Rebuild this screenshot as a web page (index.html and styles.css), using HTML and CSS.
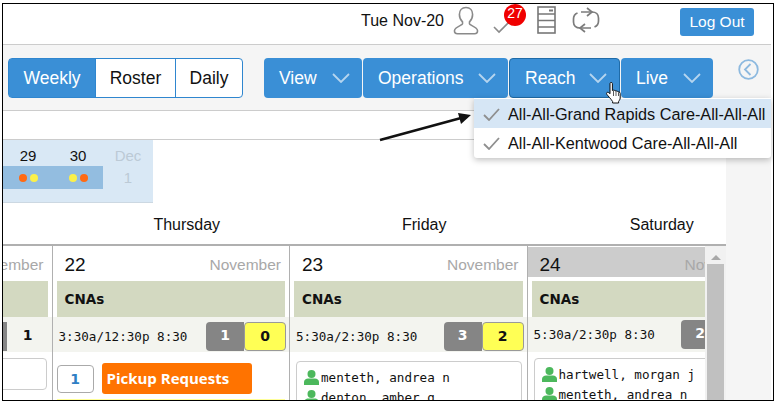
FILE: index.html
```html
<!DOCTYPE html>
<html lang="en">
<head>
    <meta charset="UTF-8">
    <title>Schedule</title>
    <link rel="stylesheet" href="styles.css">
</head>
<body>
    <div class="frame">
        <div class="topbar">
            <span class="today">Tue Nov-20</span>
            <svg class="icon-user" width="26" height="29" viewBox="0 0 26 29" fill="none" stroke="#8a8a8a" stroke-width="1.6">
                <path d="M13 1.5c-4.2 0-6.6 3-6.6 7 0 3 1.300 5.600 3.100 7.300v2.200c0 1.200-7.700 3-8 6.500-.2 2 .8 3.200 3 3.200h17c2.200 0 3.200-1.200 3-3.200-.3-3.500-8-5.300-8-6.500v-2.200c1.800-1.700 3.100-4.300 3.100-7.300 0-4-2.400-7-6.600-7z"/>
            </svg>
            <span class="tasks">
                <svg width="18" height="14" viewBox="0 0 18 14" fill="none" stroke="#8a8a8a" stroke-width="1.6">
                    <path d="M1 7l5 5L17 1"/>
                </svg>
                <span class="badge">27</span>
            </span>
            <svg class="icon-cabinet" width="19" height="28" viewBox="0 0 19 28" fill="none" stroke="#777" stroke-width="1.600">
                <rect x="1" y="1" width="17" height="26"/>
                <path d="M1 8h17M1 14.500h17M1 21h17"/>
                <path d="M12 4.500h4" stroke-width="2"/>
            </svg>
            <svg class="icon-sync" width="28" height="27" viewBox="0 0 28 27" fill="none" stroke="#7c7c7c" stroke-width="1.700">
                <path d="M9 5h11c4 0 6.500 2.500 6.500 6v3c0 3-1.500 5-4 6"/>
                <path d="M19 21H8c-4 0-6.500-2.500-6.500-6v-3c0-3 1.500-5 4-6"/>
                <path d="M15 1l5 4-5 4M13 17l-5 4 5 4"/>
            </svg>
            <button class="logout">Log Out</button>
        </div>

        <div class="toolbar">
            <div class="views">
                <span class="view active">Weekly</span>
                <span class="view">Roster</span>
                <span class="view">Daily</span>
            </div>
            <div class="menus">
                <span class="menu menu-view">View <svg class="chev" width="18" height="10" viewBox="0 0 18 10"><path d="M1 1l8 8 8-8"/></svg></span>
                <span class="menu menu-ops">Operations <svg class="chev" width="18" height="10" viewBox="0 0 18 10"><path d="M1 1l8 8 8-8"/></svg></span>
                <span class="menu menu-reach">Reach <svg class="chev" width="18" height="10" viewBox="0 0 18 10"><path d="M1 1l8 8 8-8"/></svg></span>
                <span class="menu menu-live">Live <svg class="chev" width="18" height="10" viewBox="0 0 18 10"><path d="M1 1l8 8 8-8"/></svg></span>
            </div>
            <svg class="back" width="21" height="21" viewBox="0 0 21 21" fill="none" stroke="#8db9df" stroke-width="1.800">
                <circle cx="10.500" cy="10.500" r="9.300"/>
                <path d="M12.500 5l-5.500 5.500 5.500 5.500"/>
            </svg>
        </div>

        <div class="body-row">
            <div class="main">
                <div class="strip"></div>
                <div class="mini">
                    <div class="mini-col">
                        <span class="mini-num">29</span>
                        <span class="mini-dots"><i class="dot orange"></i><i class="dot yellow"></i></span>
                    </div>
                    <div class="mini-col">
                        <span class="mini-num">30</span>
                        <span class="mini-dots"><i class="dot yellow"></i><i class="dot orange"></i></span>
                    </div>
                    <div class="mini-col off">
                        <span class="mini-num">Dec</span>
                        <span class="mini-next">1</span>
                    </div>
                </div>
                <div class="weekdays">
                    <span>Thursday</span>
                    <span>Friday</span>
                    <span>Saturday</span>
                </div>
                <div class="calendar">
                    <div class="days">
                        <div class="day">
                            <div class="day-head"><span class="day-num">21</span><span class="day-month">November</span></div>
                            <div class="role">CNAs</div>
                            <div class="shift">
                                <span class="shift-time"></span>
                                <span class="count grey">1</span>
                                <span class="count plain">1</span>
                            </div>
                            <div class="card card-empty"></div>
                        </div>
                        <div class="day">
                            <div class="day-head"><span class="day-num">22</span><span class="day-month">November</span></div>
                            <div class="role">CNAs</div>
                            <div class="shift">
                                <span class="shift-time">3:30a/12:30p 8:30</span>
                                <span class="count grey">1</span>
                                <span class="count yellow">0</span>
                            </div>
                            <div class="pickup">
                                <span class="pickup-count">1</span>
                                <span class="pickup-btn">Pickup Requests</span>
                            </div>
                            <div class="note"></div>
                        </div>
                        <div class="day">
                            <div class="day-head"><span class="day-num">23</span><span class="day-month">November</span></div>
                            <div class="role">CNAs</div>
                            <div class="shift">
                                <span class="shift-time">5:30a/2:30p 8:30</span>
                                <span class="count grey">3</span>
                                <span class="count yellow">2</span>
                            </div>
                            <div class="card card-low">
                                <div class="person"><svg width="15" height="15" viewBox="0 0 15 15"><circle cx="7.500" cy="4" r="4"/><path d="M0 15v-3c0-2 2-3.500 4-3.500h7c2 0 4 1.500 4 3.500v3z"/></svg>menteth, andrea n</div>
                                <div class="person"><svg width="15" height="15" viewBox="0 0 15 15"><circle cx="7.500" cy="4" r="4"/><path d="M0 15v-3c0-2 2-3.500 4-3.500h7c2 0 4 1.500 4 3.500v3z"/></svg>denton, amber g</div>
                            </div>
                        </div>
                        <div class="day today-col">
                            <div class="day-head"><span class="day-num">24</span><span class="day-month">November</span></div>
                            <div class="role">CNAs</div>
                            <div class="shift">
                                <span class="shift-time">5:30a/2:30p 8:30</span>
                                <span class="count grey">2</span>
                                <span class="count yellow">0</span>
                            </div>
                            <div class="card">
                                <div class="person"><svg width="15" height="15" viewBox="0 0 15 15"><circle cx="7.500" cy="4" r="4"/><path d="M0 15v-3c0-2 2-3.500 4-3.500h7c2 0 4 1.500 4 3.500v3z"/></svg>hartwell, morgan j</div>
                                <div class="person"><svg width="15" height="15" viewBox="0 0 15 15"><circle cx="7.500" cy="4" r="4"/><path d="M0 15v-3c0-2 2-3.500 4-3.500h7c2 0 4 1.500 4 3.500v3z"/></svg>menteth, andrea n</div>
                            </div>
                        </div>
                    </div>
                    <div class="scrollbar">
                        <span class="scroll-up"></span>
                        <span class="scroll-thumb"></span>
                    </div>
                </div>
            </div>
            <div class="side"></div>
        </div>

        <!-- open Reach menu, callout arrow and pointer sit over the page -->
        <div class="dropdown">
            <div class="drop-item current"><svg width="17" height="13" viewBox="0 0 17 13" fill="none" stroke="#8f8f8f" stroke-width="1.800"><path d="M1 7l5 5L16 1"/></svg>All-All-Grand Rapids Care-All-All-All</div>
            <div class="drop-item"><svg width="17" height="13" viewBox="0 0 17 13" fill="none" stroke="#8f8f8f" stroke-width="1.800"><path d="M1 7l5 5L16 1"/></svg>All-All-Kentwood Care-All-All-All</div>
        </div>
        <svg class="callout" width="94" height="32" viewBox="0 0 94 32">
            <path d="M1 28L82 6" stroke="#111" stroke-width="2.600"/>
            <path d="M92 3L79 1l3 11z" fill="#111"/>
        </svg>
        <svg class="pointer" width="17" height="23" viewBox="0 0 17 23">
            <path fill="#fff" stroke="#111" d="M4 1.500c0-1.400 2.400-1.400 2.400 0V8.500l1-.3c.6 0 1.400 0 1.600.6l1.400.2c.6 0 1.200.2 1.400.7l1.200.3c.8.1 1.200.6 1.200 1.400v4.600c0 1.500-1 2.500-1.600 3.500v1.500H6.600v-1.500C5 17 2 14 .8 12.300c-.6-1-.2-2 .8-2 .9 0 1.700.8 2.400 1.500z"/>
            <path fill="none" stroke="#111" stroke-width=".7" d="M7.500 9v5M10 9.500V14M12.500 10.500V14"/>
        </svg>
    </div>
</body>
</html>
```

FILE: styles.css
```css
* {
    box-sizing: border-box;
}
body {
    margin: 0;
    background: white;
    font-family: "Liberation Sans", Arial, sans-serif;
    color: #111;
}
.frame {
    position: relative;
    width: 772px;
    height: 398px;
    margin: 3px 0 0 2px;
    padding-right: 2px;
    border: 1px solid #000;
    overflow: hidden;
    display: flex;
    flex-direction: column;
    background: white;
}

/* top bar */
.topbar {
    height: 41px;
    flex: none;
    display: flex;
    align-items: flex-start;
    padding-right: 17px;
    border-bottom: 1px solid #ccc;
}
.today {
    margin-left: auto;
    margin-top: 8px;
    font-size: 16px;
}
.icon-user {
    margin: 2px 0 0 9px;
}
.tasks {
    position: relative;
    width: 18px;
    height: 14px;
    margin: 16px 0 0 14px;
}
.tasks svg {
    display: block;
}
.badge {
    position: absolute;
    left: 11px;
    top: -16px;
    width: 22px;
    height: 22px;
    border-radius: 50%;
    background: #f00000;
    color: white;
    font-size: 14px;
    line-height: 19px;
    text-align: center;
}
.icon-cabinet {
    margin: 2px 0 0 26px;
}
.icon-sync {
    margin: 3px 0 0 16px;
}
.logout {
    width: 74px;
    height: 28px;
    margin: 4px 0 0 80px;
    padding: 0;
    border: none;
    border-radius: 3px;
    background: #3a8fd6;
    color: white;
    font-family: inherit;
    font-size: 15.5px;
}

/* toolbar */
.toolbar {
    height: 66px;
    flex: none;
    display: flex;
    align-items: flex-start;
    padding: 13px 0 0 5px;
    background: #f5f5f5;
    border-bottom: 1px solid #ccc;
}
.views {
    display: flex;
    height: 40px;
    border: 1px solid #2f86cf;
    border-radius: 4px;
    background: white;
    font-size: 17.5px;
}
.view {
    display: flex;
    align-items: center;
    justify-content: center;
    width: 80px;
    border-left: 1px solid #2f86cf;
}
.view:last-child {
    width: 67px;
}
.view.active {
    width: 86px;
    border-left: none;
    background: #3a8fd6;
    color: white;
}
.menus {
    display: flex;
    gap: 1px;
    margin-left: 21px;
}
.menu {
    display: flex;
    align-items: center;
    justify-content: space-between;
    height: 40px;
    padding: 0 12px 0 15px;
    border-radius: 4px;
    background: #3a8fd6;
    color: white;
    font-size: 17.5px;
}
.menu-view {
    width: 98px;
}
.menu-ops {
    width: 145px;
}
.menu-reach {
    width: 111px;
    border: 1px solid #1f6ba8;
}
.menu-live {
    width: 92px;
}
.chev {
    fill: none;
    stroke: #b5d5ef;
    stroke-width: 1.8;
}
.back {
    margin: 1px 0 0 25px;
}

/* page under the toolbar */
.body-row {
    flex: 1;
    min-height: 0;
    display: flex;
}
.main {
    width: 723px;
    flex: none;
    display: flex;
    flex-direction: column;
    min-height: 0;
}
.side {
    flex: 1;
    background: #f5f5f5;
}
.strip {
    height: 29px;
    flex: none;
    border-bottom: 1px solid #ccc;
}

/* mini month */
.mini {
    width: 150px;
    height: 63px;
    flex: none;
    display: flex;
    background: #d9e8f5;
    border-bottom: 1px solid #ccd8e2;
}
.mini-col {
    width: 50px;
    display: flex;
    flex-direction: column;
    align-items: center;
    padding-top: 7px;
    font-size: 15px;
}
.mini-num {
    height: 19px;
}
.mini-dots {
    align-self: stretch;
    display: flex;
    justify-content: center;
    align-items: center;
    gap: 3px;
    height: 23px;
    background: #93bde0;
}
.dot {
    width: 8px;
    height: 8px;
    border-radius: 50%;
}
.dot.orange {
    background: #ff6a13;
}
.dot.yellow {
    background: #fbf04a;
}
.off {
    color: #bccad6;
}
.mini-next {
    line-height: 23px;
}

/* weekday titles */
.weekdays {
    height: 43px;
    flex: none;
    display: flex;
    padding-left: 65px;
    border-bottom: 2px solid #b0b0b0;
    font-size: 16px;
}
.weekdays span {
    flex: none;
    width: 237.5px;
    padding-top: 13px;
    text-align: center;
}

/* week grid */
.calendar {
    flex: 1;
    min-height: 0;
    display: flex;
}
.days {
    width: 702px;
    flex: none;
    display: flex;
    overflow: hidden;
}
.day {
    flex: 0 0 237.5px;
    padding-top: 1px;
    border-right: 1px solid #b0b0b0;
}
.day:first-child {
    margin-left: -188px;
}
.day-head {
    height: 30px;
    display: flex;
    align-items: center;
    justify-content: space-between;
    padding: 6px 8px 0 12px;
}
.today-col .day-head {
    background: #cccccc;
}
.day-num {
    font-size: 19px;
}
.day-month {
    font-size: 15.500px;
    color: #a8a8a8;
}
.role {
    height: 36px;
    margin: 4px 4px 0;
    padding-left: 8px;
    background: #d3d9c1;
    font-family: "DejaVu Sans", sans-serif;
    font-size: 13.500px;
    font-weight: bold;
    line-height: 37px;
}
.shift {
    height: 35px;
    display: flex;
    align-items: center;
    padding: 3px 3px 0 6px;
    background: #f3f4ef;
}
.today-col .shift {
    padding-top: 0;
}
.shift-time {
    flex: 1;
    font-family: "DejaVu Sans Mono", monospace;
    font-size: 12.6px;
}
.count {
    height: 29px;
    font-family: "DejaVu Sans", sans-serif;
    font-size: 14px;
    font-weight: bold;
    line-height: 27px;
    text-align: center;
}
.count.grey {
    width: 38px;
    border-radius: 4px 0 0 4px;
    background: #858585;
    color: white;
}
.count.yellow {
    width: 42px;
    border: 1px solid #999;
    border-radius: 4px;
    background: #ffff55;
}
.count.plain {
    width: 42px;
}
.card {
    margin: 6px 5px 0 6px;
    padding: 5px 0 0 7px;
    border: 1px solid #ccc;
    border-radius: 4px;
    background: white;
}
.card-empty {
    height: 32px;
}
.card-low {
    margin-top: 9px;
}
.person {
    display: flex;
    align-items: center;
    gap: 2px;
    height: 20px;
    font-family: "DejaVu Sans Mono", monospace;
    font-size: 12.6px;
}
.person svg {
    fill: #4cb85c;
}
.pickup {
    display: flex;
    align-items: center;
    gap: 8px;
    margin: 11px 0 0 4px;
}
.pickup-count {
    width: 37px;
    height: 28px;
    border: 1px solid #aaa;
    border-radius: 4px;
    color: #2f7fc4;
    font-family: "DejaVu Sans", sans-serif;
    font-size: 14px;
    font-weight: bold;
    line-height: 26px;
    text-align: center;
}
.pickup-btn {
    width: 150px;
    height: 31px;
    padding-left: 5px;
    border-radius: 3px;
    background: #ff7300;
    color: white;
    font-family: "Open Sans", sans-serif;
    font-size: 15px;
    font-weight: bold;
    line-height: 31px;
}
.note {
    height: 20px;
    margin: 5px 4px 0;
    background: #ffff99;
}

/* scrollbar */
.scrollbar {
    flex: 1;
    display: flex;
    flex-direction: column;
    align-items: center;
    background: #f1f1f1;
}
.scroll-up {
    width: 0;
    height: 0;
    margin: 9px 0 4px;
    border: 5px solid transparent;
    border-top: none;
    border-bottom: 5px solid #a8a8a8;
}
.scroll-thumb {
    flex: 1;
    width: 17px;
    background: #c0c0c0;
}

/* overlays */
.dropdown {
    position: absolute;
    left: 471px;
    top: 94px;
    width: 297px;
    padding: 1px 0;
    background: white;
    border-radius: 0 0 3px 3px;
    box-shadow: 0 2px 6px rgba(0,0,0,0.25);
    font-size: 16.250px;
}
.drop-item {
    display: flex;
    align-items: center;
    gap: 8px;
    height: 29px;
    padding: 1px 0 0 9px;
}
.drop-item.current {
    background: #d6e6f5;
}
.callout {
    position: absolute;
    left: 376px;
    top: 108px;
}
.pointer {
    position: absolute;
    left: 603px;
    top: 78px;
}
```
